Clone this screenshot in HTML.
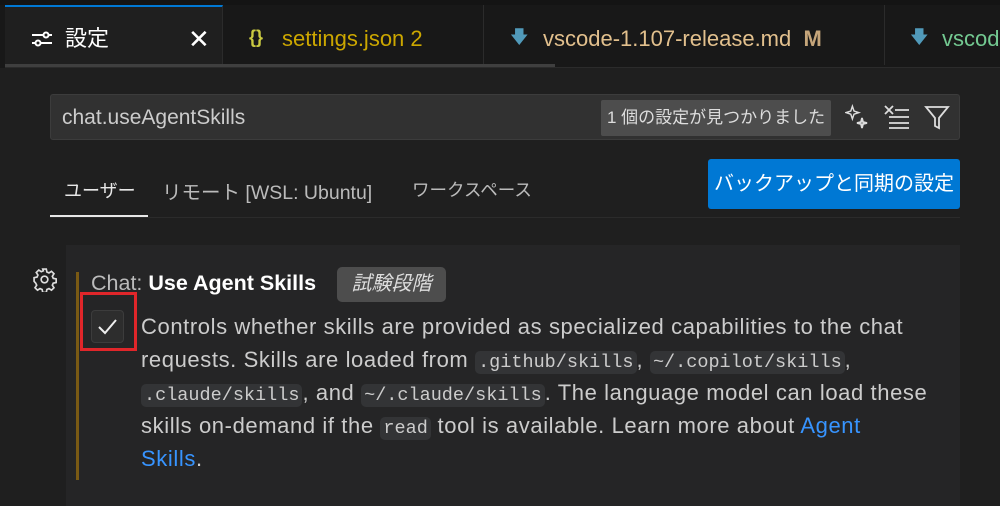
<!DOCTYPE html>
<html><head><meta charset="utf-8"><style>
*{margin:0;padding:0;box-sizing:border-box}
body{width:1000px;height:506px;background:#1f1f1f;font-family:"Liberation Sans","Noto Sans CJK JP",sans-serif;color:#ccc;position:relative;overflow:hidden}
.a{position:absolute;white-space:nowrap}
.tabs{position:absolute;left:0;top:0;width:1000px;height:68px;background:#181818;border-top:5px solid #141414}
.tab{position:absolute;top:5px;height:60px;border-right:1px solid #2b2b2b;font-size:22px;line-height:60px}
code{font-family:"Liberation Mono",monospace;font-size:18.5px;letter-spacing:0;background:#333436;border-radius:5px;padding:1px 3px;color:#ccc}
.ln{position:absolute;left:141px;font-size:22px;letter-spacing:0.6px;white-space:nowrap;color:#ccc}
</style></head><body>
<div class="tabs"></div>
<div class="tab" style="left:5px;width:218px;background:#1f1f1f;border-top:2px solid #0078d4;top:5px;color:#fff">
 <svg class="a" style="left:26px;top:24px" width="22" height="16" viewBox="0 0 22 16" fill="none" stroke="#fff" stroke-width="2"><line x1="1" y1="4" x2="12" y2="4"/><circle cx="15" cy="4" r="2.5"/><line x1="18" y1="4" x2="21" y2="4"/><line x1="1" y1="12" x2="4" y2="12"/><circle cx="7" cy="12" r="2.5"/><line x1="10" y1="12" x2="21" y2="12"/></svg>
 <span class="a" style="left:60px;top:2px">設定</span>
 <span class="a" style="left:183px;top:2px;font-size:26px">✕</span>
</div>
<div class="tab" style="left:224px;width:260px;color:#cca700">
 <span class="a" style="left:25px;top:2px;color:#cbcb41;font-weight:bold;font-size:18px">{}</span>
 <span class="a" style="left:58px;top:4px">settings.json&nbsp;2</span>
</div>
<div class="tab" style="left:485px;width:400px;color:#e2c08d">
 <span class="a" style="left:25px;top:2px;color:#519aba;font-size:18px">🡇</span>
 <span class="a" style="left:58px;top:4px">vscode-1.107-release.md&nbsp;&nbsp;<b style="color:#c5a57a">M</b></span>
</div>
<div class="tab" style="left:886px;width:120px;color:#73c991;border:none">
 <span class="a" style="left:24px;top:2px;color:#519aba;font-size:18px">🡇</span>
 <span class="a" style="left:56px;top:4px">vscode</span>
</div>
<div class="a" style="left:5px;top:64px;width:550px;height:4px;background:#3f3f3f"></div>
<div class="a" style="left:5px;top:67px;width:995px;height:1px;background:#2b2b2b"></div>

<div class="a" style="left:50px;top:94px;width:910px;height:46px;background:#313131;border:1px solid #3c3c3c;border-radius:3px"></div>
<span class="a" style="left:62px;top:106px;font-size:21px;color:#ccc">chat.useAgentSkills</span>
<div class="a" style="left:601px;top:100px;width:230px;height:36px;background:#4d4d4d;border-radius:2px;color:#ddd;font-size:17px;line-height:36px;padding-left:6px">1 個の設定が見つかりました</div>
<svg class="a" style="left:845px;top:104px" width="24" height="26" viewBox="0 0 24 26" fill="none" stroke="#ddd" stroke-width="1.8"><path d="M8 4 L10 10 L16 12 L10 14 L8 20 L6 14 L0 12 L6 10 Z" transform="translate(1,-1) scale(.8)"/><path d="M17 14 L18 18 L22 19 L18 20 L17 24 L16 20 L12 19 L16 18 Z"/></svg>
<svg class="a" style="left:883px;top:104px" width="28" height="26" viewBox="0 0 28 26" fill="none" stroke="#ddd" stroke-width="1.8"><path d="M2 2 L10 10 M10 2 L2 10 M12 6 H26 M6 13 H26 M6 19 H26 M6 24 H26"/></svg>
<svg class="a" style="left:924px;top:104px" width="26" height="26" viewBox="0 0 26 26" fill="none" stroke="#ddd" stroke-width="1.8"><path d="M2 3 H24 L15 14 V24 L11 22 V14 Z"/></svg>

<span class="a" style="left:64px;top:177px;font-size:18px;color:#e7e7e7">ユーザー</span>
<div class="a" style="left:50px;top:215px;width:98px;height:2px;background:#e7e7e7"></div>
<span class="a" style="left:162px;top:176px;font-size:19.5px;color:#bbb">リモート [WSL: Ubuntu]</span>
<span class="a" style="left:412px;top:177px;font-size:17.5px;color:#bbb">ワークスペース</span>
<div class="a" style="left:708px;top:159px;width:252px;height:50px;background:#0078d4;border-radius:3px;color:#fff;font-size:20px;line-height:50px;text-align:center">バックアップと同期の設定</div>
<div class="a" style="left:50px;top:217px;width:910px;height:1px;background:#2b2b2b"></div>

<div class="a" style="left:66px;top:245px;width:894px;height:261px;background:#252526"></div>
<svg class="a" style="left:32px;top:267px" width="25" height="25" viewBox="0 0 24 24" fill="none" stroke="#ddd" stroke-width="1.6"><circle cx="12" cy="12" r="3.2"/><path d="M10.3 2h3.4l.6 2.8 2 .9 2.4-1.6 2.4 2.4-1.6 2.4.9 2 2.8.6v3.4l-2.8.6-.9 2 1.6 2.4-2.4 2.4-2.4-1.6-2 .9-.6 2.8h-3.4l-.6-2.8-2-.9-2.4 1.6-2.4-2.4 1.6-2.4-.9-2L2 13.7v-3.4l2.8-.6.9-2-1.6-2.4 2.4-2.4 2.4 1.6 2-.9z"/></svg>
<div class="a" style="left:76px;top:272px;width:3px;height:208px;background:#7a5a14"></div>
<span class="a" style="left:91px;top:271px;font-size:21.5px;color:#bbb">Chat: <b style="color:#fff">Use Agent Skills</b></span>
<div class="a" style="left:337px;top:267px;width:109px;height:35px;background:#4d4d4d;border-radius:5px;color:#ddd;font-style:italic;font-size:20px;line-height:35px;text-align:center">試験段階</div>
<div class="a" style="left:80px;top:292px;width:57px;height:59px;border:3px solid #e0262a"></div>
<div class="a" style="left:91px;top:310px;width:33px;height:33px;background:#2d2d2d;border:1px solid #3c3c3c;border-radius:4px"></div>
<svg class="a" style="left:94px;top:313px" width="27" height="27" viewBox="0 0 27 27" fill="none" stroke="#eee" stroke-width="2"><path d="M5 14 L11 20 L22 7"/></svg>

<div class="ln" style="top:314px">Controls whether skills are provided as specialized capabilities to the chat</div>
<div class="ln" style="top:347px">requests. Skills are loaded from <code>.github/skills</code>, <code>~/.copilot/skills</code>,</div>
<div class="ln" style="top:380px"><code>.claude/skills</code>, and <code>~/.claude/skills</code>. The language model can load these</div>
<div class="ln" style="top:413px">skills on-demand if the <code>read</code> tool is available. Learn more about <span style="color:#3794ff">Agent</span></div>
<div class="ln" style="top:446px"><span style="color:#3794ff">Skills</span>.</div>
</body></html>
